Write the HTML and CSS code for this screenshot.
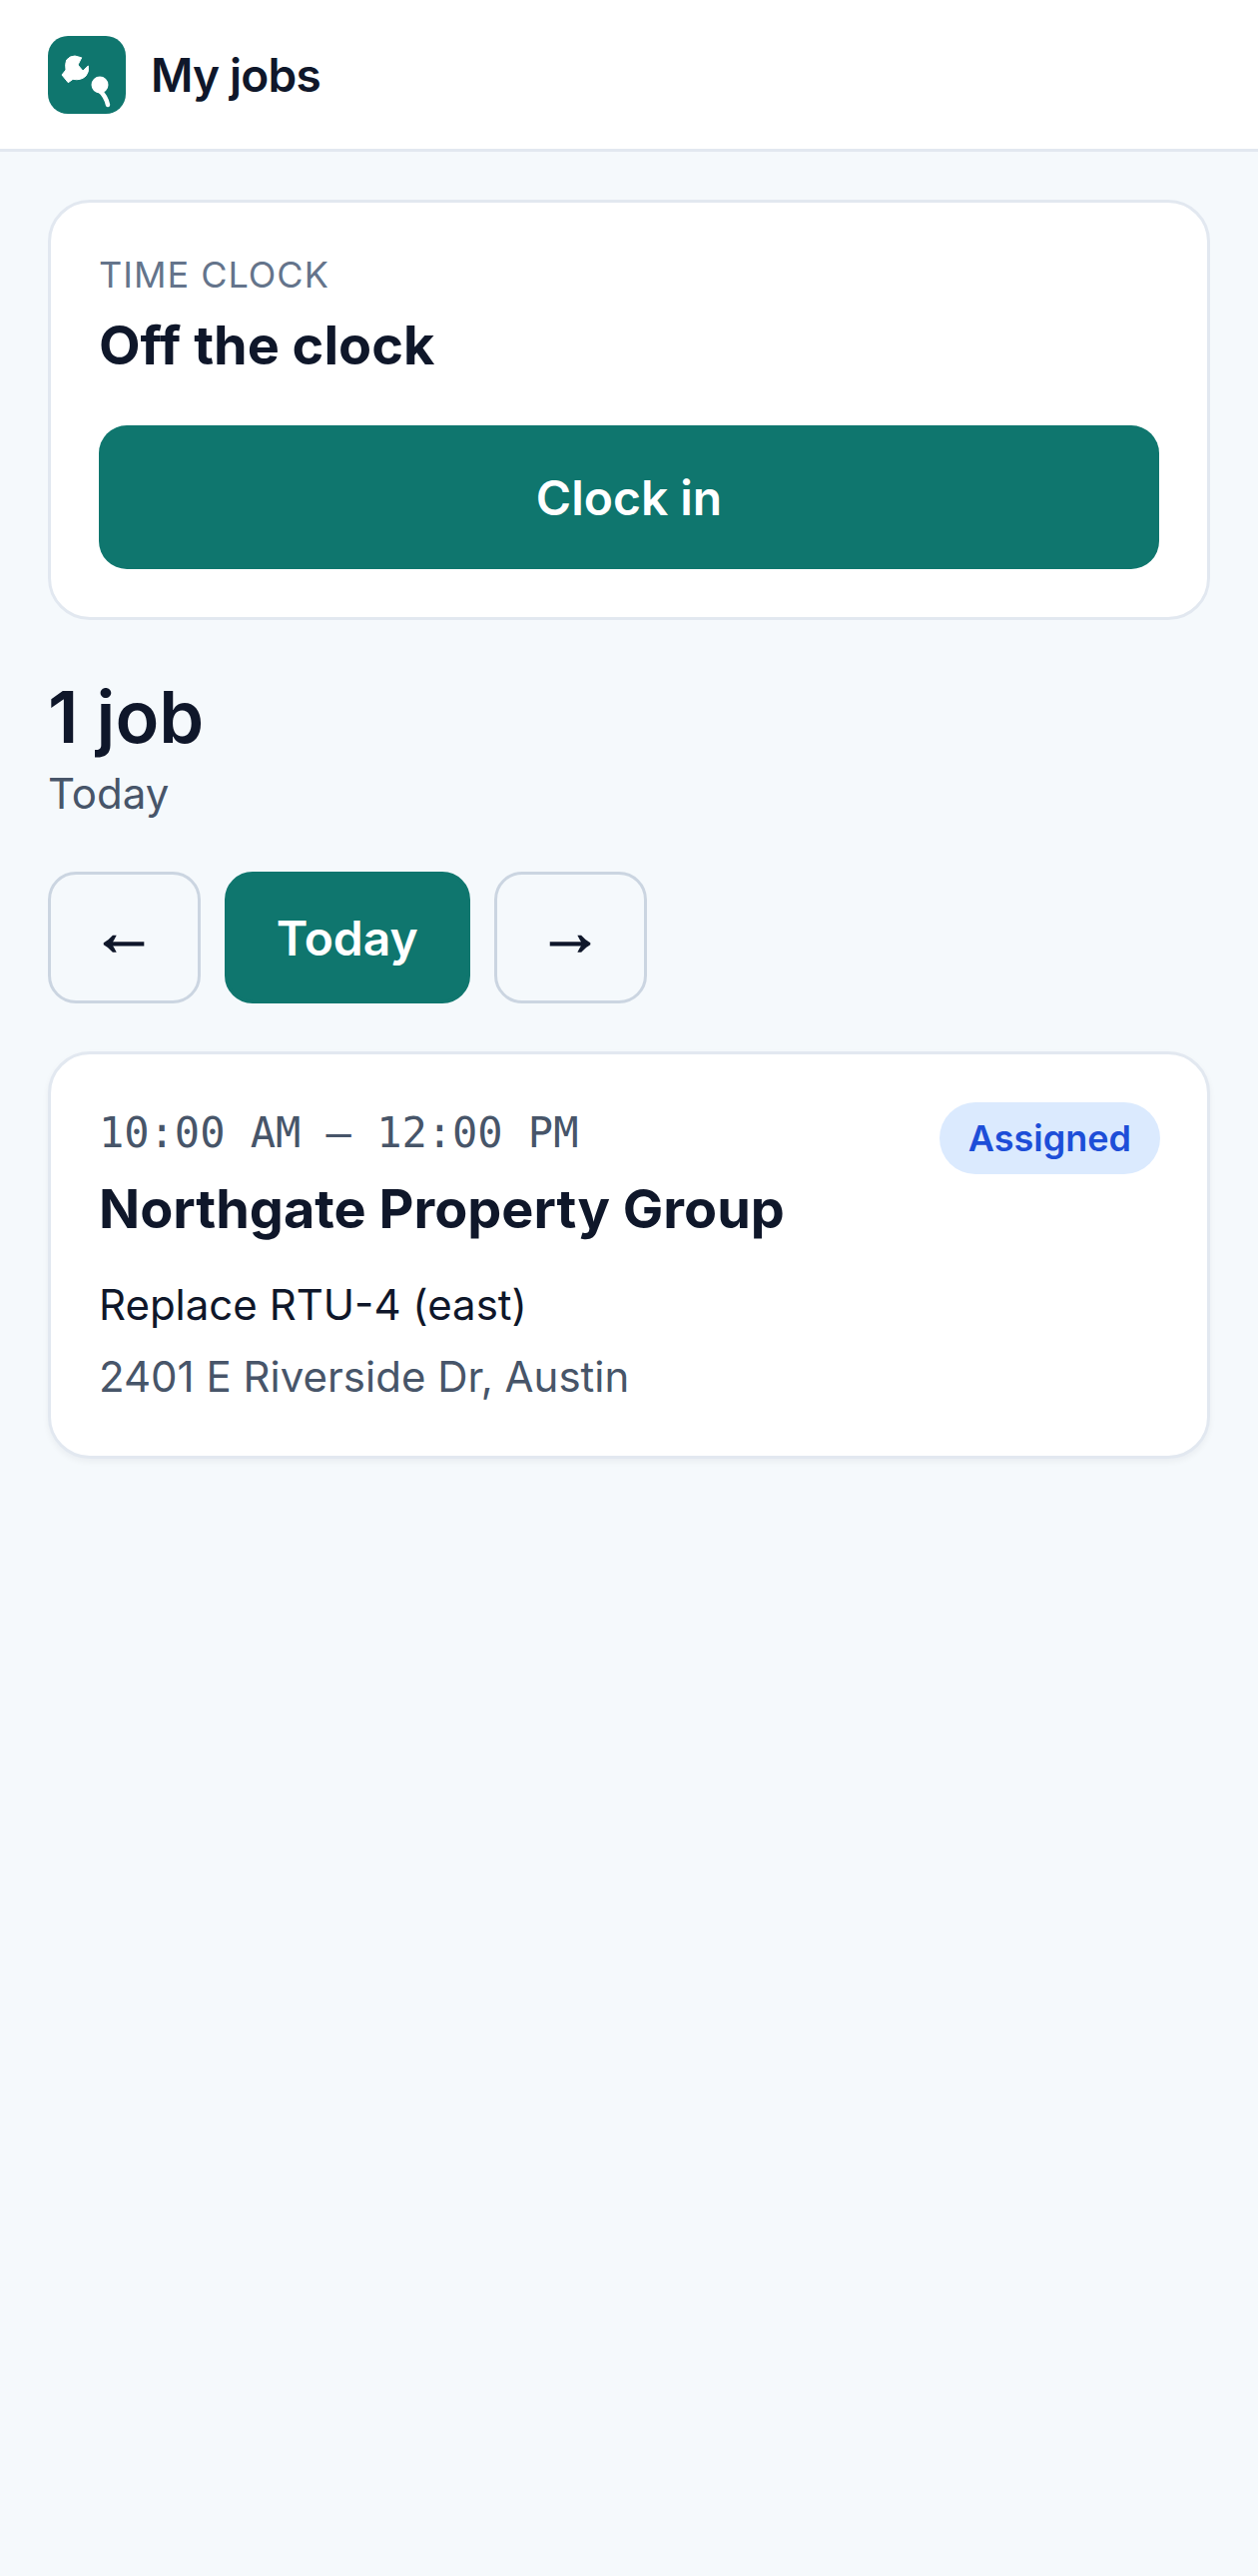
FILE: index.html
```html
<!DOCTYPE html>
<html lang="en">
<head>
    <meta charset="UTF-8">
    <meta name="viewport" content="width=device-width, initial-scale=1.0">
    <title>My jobs</title>
    <link rel="stylesheet" href="styles.css">
</head>
<body>
    <header class="topbar">
        <div class="logo">
            <svg viewBox="0 0 78 78" width="78" height="78">
                <path d="M18.7 24 Q22 20 27 20 L33.7 21.8 L30 29 L35 35 L40.3 30 Q41.5 36 38 40 Q33 45 25 43.3 L20.3 46.7 L14 39 L18 34 Q17 28 18.7 24 Z" fill="#fff" stroke="#fff" stroke-linejoin="round"/>
                <circle cx="52" cy="49" r="8.5" fill="#fff"/>
                <path d="M51 54 Q58 60 60 69" fill="none" stroke="#fff" stroke-width="4.5" stroke-linecap="round"/>
            </svg>
        </div>
        <span class="topbar-title">My jobs</span>
    </header>

    <main class="content">
        <section class="card clock">
            <div class="clock-label">TIME CLOCK</div>
            <div class="clock-status">Off the clock</div>
            <button class="clock-btn" type="button">Clock in</button>
        </section>

        <div class="summary">
            <h1>1 job</h1>
            <div class="summary-day">Today</div>
        </div>

        <nav class="day-nav">
            <button class="nav-btn" type="button">←</button>
            <button class="nav-btn nav-today" type="button">Today</button>
            <button class="nav-btn" type="button">→</button>
        </nav>

        <article class="card job">
            <div class="job-main">
                <div class="job-time">10:00 AM – 12:00 PM</div>
                <div class="job-client">Northgate Property Group</div>
                <div class="job-title">Replace RTU-4 (east)</div>
                <div class="job-address">2401 E Riverside Dr, Austin</div>
            </div>
            <span class="badge">Assigned</span>
        </article>
    </main>
</body>
</html>
```

FILE: styles.css
```css
* {
    box-sizing: border-box;
}
body {
    margin: 0;
    min-height: 2580px;
    font-family: Inter, sans-serif;
    background-color: #f5f9fc;
    color: #0f172a;
}
.topbar {
    display: flex;
    align-items: center;
    gap: 25px;
    height: 152px;
    padding: 0 48px;
    background-color: #fff;
    border-bottom: 3px solid #e2e8f0;
}
.logo {
    width: 78px;
    height: 78px;
    border-radius: 20px;
    background-color: #0f766e;
}
.logo svg {
    display: block;
}
.topbar-title {
    font-size: 46px;
    font-weight: 600;
    letter-spacing: -0.8px;
}
.content {
    padding: 48px;
}
.card {
    background-color: #fff;
    border: 3px solid #e2e8f0;
    border-radius: 42px;
    padding: 48px;
}
.clock-label {
    font-size: 36px;
    line-height: 48px;
    letter-spacing: 1px;
    color: #64748b;
}
.clock-status {
    margin-top: 14px;
    font-size: 54px;
    line-height: 66px;
    font-weight: 700;
}
.clock-btn {
    display: block;
    width: 100%;
    height: 144px;
    margin-top: 47px;
    border: none;
    border-radius: 28px;
    background-color: #0f766e;
    color: #fff;
    font-family: inherit;
    font-size: 48px;
    font-weight: 600;
}
.summary {
    margin-top: 54px;
}
.summary h1 {
    margin: 0;
    font-size: 72px;
    line-height: 86px;
    font-weight: 600;
}
.summary-day {
    margin-top: 8px;
    font-size: 42px;
    line-height: 52px;
    color: #475569;
}
.day-nav {
    display: flex;
    gap: 24px;
    margin-top: 52px;
}
.nav-btn {
    width: 152.5px;
    height: 132px;
    padding: 0 0 12px;
    border: 3px solid #cbd5e1;
    border-radius: 28px;
    background: transparent;
    color: #0f172a;
    font-family: "Liberation Sans", sans-serif;
    font-size: 66px;
    -webkit-text-stroke: 1.5px #0f172a;
}
.nav-today {
    width: 246.5px;
    padding: 0;
    border-color: #0f766e;
    background-color: #0f766e;
    color: #fff;
    font-family: inherit;
    font-size: 48px;
    font-weight: 600;
    -webkit-text-stroke: 0;
}
.job {
    display: flex;
    justify-content: space-between;
    align-items: flex-start;
    margin-top: 48px;
    padding-bottom: 50px;
    box-shadow: 0 3px 6px rgba(15, 23, 42, 0.05);
}
.job-time {
    font-family: "DejaVu Sans Mono", monospace;
    font-size: 42px;
    line-height: 62px;
    color: #475569;
}
.job-client {
    margin-top: 10px;
    font-size: 54px;
    line-height: 70px;
    font-weight: 700;
}
.job-title {
    margin-top: 32px;
    font-size: 42px;
    line-height: 58px;
}
.job-address {
    margin-top: 14px;
    font-size: 42px;
    line-height: 58px;
    color: #475569;
}
.badge {
    padding: 15px 29px;
    margin-right: -1px;
    border-radius: 999px;
    background-color: #dbeafe;
    color: #1d4ed8;
    font-size: 36px;
    line-height: 42px;
    font-weight: 600;
}
```
